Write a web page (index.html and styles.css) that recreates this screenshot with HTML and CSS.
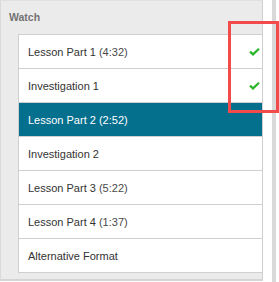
FILE: index.html
```html
<!DOCTYPE html>
<html lang="en">
<head>
  <meta charset="utf-8" />
  <meta name="viewport" content="width=device-width, initial-scale=1" />
  <title>Watch</title>
  <link rel="stylesheet" href="styles.css">
</head>
<body>
  <div class="frame">
    <div class="panel">
      <h3 class="panel-title">Watch</h3>
      <ul class="lessons">
        <li class="lesson">
          <span>Lesson Part 1 <span class="time">(4:32)</span></span>
          <svg class="check" width="11" height="8" viewBox="0 0 11 8"><polyline points="1,3.6 4,6.4 10,0.8" /></svg>
        </li>
        <li class="lesson">
          <span>Investigation 1</span>
          <svg class="check" width="11" height="8" viewBox="0 0 11 8"><polyline points="1,3.6 4,6.4 10,0.8" /></svg>
        </li>
        <li class="lesson active"><span>Lesson Part 2 <span class="time">(2:52)</span></span></li>
        <li class="lesson"><span>Investigation 2</span></li>
        <li class="lesson"><span>Lesson Part 3 <span class="time">(5:22)</span></span></li>
        <li class="lesson"><span>Lesson Part 4 <span class="time">(1:37)</span></span></li>
        <li class="lesson"><span>Alternative Format</span></li>
      </ul>
    </div>
    <div class="gutter"></div>
    <div class="rail"></div>

    <!-- highlight box drawn over the checkmarks -->
    <div class="callout"></div>
  </div>
</body>
</html>
```

FILE: styles.css
```css
body {
  margin: 0;
  background: #fff;
  font-family: "Liberation Sans", Arial, sans-serif;
}
.frame {
  position: relative;
  display: flex;
  width: 279px;
  height: 282px;
}
.panel {
  width: 261px;
  height: 278px;
  background: #ebebeb;
  border: 1px solid #d4d4d4;
  border-bottom-width: 2px;
  border-left-color: #dadada;
  border-top-color: #e0e0e0;
  border-right-color: #cfcfcf;
}
.panel-title {
  margin: 0;
  padding: 10px 0 10px 8px;
  font-size: 10.5px;
  line-height: 13px;
  font-weight: bold;
  color: #737373;
}
.lessons {
  list-style: none;
  margin: 0 0 0 17px;
  padding: 0;
  background: #fff;
  border-top: 1px solid #cfcfcf;
  border-left: 1px solid #cfcfcf;
}
.lesson {
  display: flex;
  align-items: center;
  justify-content: space-between;
  height: 33px;
  padding: 0 2px 0 9px;
  border-bottom: 1px solid #cfcfcf;
  font-size: 11px;
  color: #333;
}
.time {
  color: #4a4a4a;
}
.lesson.active {
  background: #056f8e;
  color: #fff;
}
.lesson.active .time {
  color: #fff;
}
.check polyline {
  fill: none;
  stroke: #2bb52b;
  stroke-width: 2.2;
}
.gutter {
  width: 9px;
}
.rail {
  width: 4px;
  background: #d9d9d9;
}
.callout {
  position: absolute;
  left: 228px;
  top: 21px;
  width: 45px;
  height: 86px;
  border: 3px solid #f14b4b;
}
```
